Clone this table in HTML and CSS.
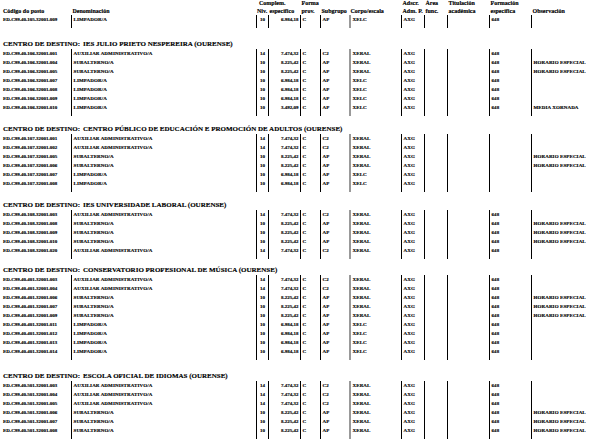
FILE: index.html
```
<!DOCTYPE html>
<html lang="gl">
<head>
<meta charset="utf-8">
<link rel="stylesheet" href="styles.css">
</head>
<body>
<div class="page">
  <div class="hdr cols">
    <div class="h code"><div class="l"></div><div class="l">Código do posto</div></div>
    <div class="h"><div class="l"></div><div class="l">Denominación</div></div>
    <div class="h niv-h"><div class="l first">Complem.</div><div class="l">Niv.</div></div>
    <div class="h"><div class="l"></div><div class="l">específico</div></div>
    <div class="h"><div class="l">Forma</div><div class="l">prov.</div></div>
    <div class="h"><div class="l"></div><div class="l">Subgrupo</div></div>
    <div class="h"><div class="l"></div><div class="l">Corpo/escala</div></div>
    <div class="h"><div class="l">Adscr.</div><div class="l">Adm. P.</div></div>
    <div class="h"><div class="l">Área</div><div class="l">func.</div></div>
    <div class="h"><div class="l">Titulación</div><div class="l">académica</div></div>
    <div class="h"><div class="l">Formación</div><div class="l">específica</div></div>
    <div class="h"><div class="l"></div><div class="l">Observación</div></div>
  </div>

  <section class="block gap-first">
    <div class="row cols"><span class="c code">ED.C99.40.105.32001.009</span><span class="c">LIMPADOR/A</span><span class="c niv">10</span><span class="c amt">6.984,18</span><span class="c">C</span><span class="c">AP</span><span class="c corpo">XELC</span><span class="c">AXG</span><span class="c"></span><span class="c"></span><span class="c">648</span><span class="c obs"></span></div>
    <div class="row stub cols"><span class="c code"></span><span class="c"></span><span class="c"></span><span class="c"></span><span class="c"></span><span class="c"></span><span class="c corpo"></span><span class="c"></span><span class="c"></span><span class="c"></span><span class="c"></span><span class="c obs"></span></div>
  </section>

  <section class="block gap-9">
    <div class="dest"><span class="lbl">CENTRO DE DESTINO:</span>IES JULIO PRIETO NESPEREIRA (OURENSE)</div>
    <div class="row cols"><span class="c code">ED.C99.40.106.32001.001</span><span class="c">AUXILIAR ADMINISTRATIVO/A</span><span class="c niv">14</span><span class="c amt">7.474,32</span><span class="c">C</span><span class="c">C2</span><span class="c corpo">XERAL</span><span class="c">AXG</span><span class="c"></span><span class="c"></span><span class="c">648</span><span class="c obs"></span></div>
    <div class="row cols"><span class="c code">ED.C99.40.106.32001.004</span><span class="c">SUBALTERNO/A</span><span class="c niv">10</span><span class="c amt">8.225,42</span><span class="c">C</span><span class="c">AP</span><span class="c corpo">XERAL</span><span class="c">AXG</span><span class="c"></span><span class="c"></span><span class="c">648</span><span class="c obs">HORARIO ESPECIAL</span></div>
    <div class="row cols"><span class="c code">ED.C99.40.106.32001.005</span><span class="c">SUBALTERNO/A</span><span class="c niv">10</span><span class="c amt">8.225,42</span><span class="c">C</span><span class="c">AP</span><span class="c corpo">XERAL</span><span class="c">AXG</span><span class="c"></span><span class="c"></span><span class="c">648</span><span class="c obs">HORARIO ESPECIAL</span></div>
    <div class="row cols"><span class="c code">ED.C99.40.106.32001.007</span><span class="c">LIMPADOR/A</span><span class="c niv">10</span><span class="c amt">6.984,18</span><span class="c">C</span><span class="c">AP</span><span class="c corpo">XELC</span><span class="c">AXG</span><span class="c"></span><span class="c"></span><span class="c">648</span><span class="c obs"></span></div>
    <div class="row cols"><span class="c code">ED.C99.40.106.32001.008</span><span class="c">LIMPADOR/A</span><span class="c niv">10</span><span class="c amt">6.984,18</span><span class="c">C</span><span class="c">AP</span><span class="c corpo">XELC</span><span class="c">AXG</span><span class="c"></span><span class="c"></span><span class="c">648</span><span class="c obs"></span></div>
    <div class="row cols"><span class="c code">ED.C99.40.106.32001.009</span><span class="c">LIMPADOR/A</span><span class="c niv">10</span><span class="c amt">6.984,18</span><span class="c">C</span><span class="c">AP</span><span class="c corpo">XELC</span><span class="c">AXG</span><span class="c"></span><span class="c"></span><span class="c">648</span><span class="c obs"></span></div>
    <div class="row cols"><span class="c code">ED.C99.40.106.32001.010</span><span class="c">LIMPADOR/A</span><span class="c niv">10</span><span class="c amt">3.492,09</span><span class="c">C</span><span class="c">AP</span><span class="c corpo">XELC</span><span class="c">AXG</span><span class="c"></span><span class="c"></span><span class="c">648</span><span class="c obs">MEDIA XORNADA</span></div>
    <div class="row stub cols"><span class="c code"></span><span class="c"></span><span class="c"></span><span class="c"></span><span class="c"></span><span class="c"></span><span class="c corpo"></span><span class="c"></span><span class="c"></span><span class="c"></span><span class="c"></span><span class="c obs"></span></div>
  </section>

  <section class="block gap-9">
    <div class="dest"><span class="lbl">CENTRO DE DESTINO:</span>CENTRO PÚBLICO DE EDUCACIÓN E PROMOCIÓN DE ADULTOS (OURENSE)</div>
    <div class="row cols"><span class="c code">ED.C99.40.107.32001.001</span><span class="c">AUXILIAR ADMINISTRATIVO/A</span><span class="c niv">14</span><span class="c amt">7.474,32</span><span class="c">C</span><span class="c">C2</span><span class="c corpo">XERAL</span><span class="c">AXG</span><span class="c"></span><span class="c"></span><span class="c"></span><span class="c obs"></span></div>
    <div class="row cols"><span class="c code">ED.C99.40.107.32001.002</span><span class="c">AUXILIAR ADMINISTRATIVO/A</span><span class="c niv">14</span><span class="c amt">7.474,32</span><span class="c">C</span><span class="c">C2</span><span class="c corpo">XERAL</span><span class="c">AXG</span><span class="c"></span><span class="c"></span><span class="c"></span><span class="c obs"></span></div>
    <div class="row cols"><span class="c code">ED.C99.40.107.32001.005</span><span class="c">SUBALTERNO/A</span><span class="c niv">10</span><span class="c amt">8.225,42</span><span class="c">C</span><span class="c">AP</span><span class="c corpo">XERAL</span><span class="c">AXG</span><span class="c"></span><span class="c"></span><span class="c"></span><span class="c obs">HORARIO ESPECIAL</span></div>
    <div class="row cols"><span class="c code">ED.C99.40.107.32001.006</span><span class="c">SUBALTERNO/A</span><span class="c niv">10</span><span class="c amt">8.225,42</span><span class="c">C</span><span class="c">AP</span><span class="c corpo">XERAL</span><span class="c">AXG</span><span class="c"></span><span class="c"></span><span class="c"></span><span class="c obs">HORARIO ESPECIAL</span></div>
    <div class="row cols"><span class="c code">ED.C99.40.107.32001.007</span><span class="c">LIMPADOR/A</span><span class="c niv">10</span><span class="c amt">6.984,18</span><span class="c">C</span><span class="c">AP</span><span class="c corpo">XELC</span><span class="c">AXG</span><span class="c"></span><span class="c"></span><span class="c"></span><span class="c obs"></span></div>
    <div class="row cols"><span class="c code">ED.C99.40.107.32001.008</span><span class="c">LIMPADOR/A</span><span class="c niv">10</span><span class="c amt">6.984,18</span><span class="c">C</span><span class="c">AP</span><span class="c corpo">XELC</span><span class="c">AXG</span><span class="c"></span><span class="c"></span><span class="c"></span><span class="c obs"></span></div>
    <div class="row stub cols"><span class="c code"></span><span class="c"></span><span class="c"></span><span class="c"></span><span class="c"></span><span class="c"></span><span class="c corpo"></span><span class="c"></span><span class="c"></span><span class="c"></span><span class="c"></span><span class="c obs"></span></div>
  </section>

  <section class="block gap-7">
    <div class="dest"><span class="lbl">CENTRO DE DESTINO:</span>IES UNIVERSIDADE LABORAL (OURENSE)</div>
    <div class="row cols"><span class="c code">ED.C99.40.108.32001.003</span><span class="c">AUXILIAR ADMINISTRATIVO/A</span><span class="c niv">14</span><span class="c amt">7.474,32</span><span class="c">C</span><span class="c">C2</span><span class="c corpo">XERAL</span><span class="c">AXG</span><span class="c"></span><span class="c"></span><span class="c">648</span><span class="c obs"></span></div>
    <div class="row cols"><span class="c code">ED.C99.40.108.32001.008</span><span class="c">SUBALTERNO/A</span><span class="c niv">10</span><span class="c amt">8.225,42</span><span class="c">C</span><span class="c">AP</span><span class="c corpo">XERAL</span><span class="c">AXG</span><span class="c"></span><span class="c"></span><span class="c">648</span><span class="c obs">HORARIO ESPECIAL</span></div>
    <div class="row cols"><span class="c code">ED.C99.40.108.32001.009</span><span class="c">SUBALTERNO/A</span><span class="c niv">10</span><span class="c amt">8.225,42</span><span class="c">C</span><span class="c">AP</span><span class="c corpo">XERAL</span><span class="c">AXG</span><span class="c"></span><span class="c"></span><span class="c">648</span><span class="c obs">HORARIO ESPECIAL</span></div>
    <div class="row cols"><span class="c code">ED.C99.40.108.32001.010</span><span class="c">SUBALTERNO/A</span><span class="c niv">10</span><span class="c amt">8.225,42</span><span class="c">C</span><span class="c">AP</span><span class="c corpo">XERAL</span><span class="c">AXG</span><span class="c"></span><span class="c"></span><span class="c">648</span><span class="c obs">HORARIO ESPECIAL</span></div>
    <div class="row cols"><span class="c code">ED.C99.40.108.32001.020</span><span class="c">AUXILIAR ADMINISTRATIVO/A</span><span class="c niv">14</span><span class="c amt">7.474,32</span><span class="c">C</span><span class="c">C2</span><span class="c corpo">XERAL</span><span class="c">AXG</span><span class="c"></span><span class="c"></span><span class="c">648</span><span class="c obs"></span></div>
    <div class="row stub cols"><span class="c code"></span><span class="c"></span><span class="c"></span><span class="c"></span><span class="c"></span><span class="c"></span><span class="c corpo"></span><span class="c"></span><span class="c"></span><span class="c"></span><span class="c"></span><span class="c obs"></span></div>
  </section>

  <section class="block gap-12">
    <div class="dest"><span class="lbl">CENTRO DE DESTINO:</span>CONSERVATORIO PROFESIONAL DE MÚSICA (OURENSE)</div>
    <div class="row cols"><span class="c code">ED.C99.40.401.32001.003</span><span class="c">AUXILIAR ADMINISTRATIVO/A</span><span class="c niv">14</span><span class="c amt">7.474,32</span><span class="c">C</span><span class="c">C2</span><span class="c corpo">XERAL</span><span class="c">AXG</span><span class="c"></span><span class="c"></span><span class="c">648</span><span class="c obs"></span></div>
    <div class="row cols"><span class="c code">ED.C99.40.401.32001.004</span><span class="c">AUXILIAR ADMINISTRATIVO/A</span><span class="c niv">14</span><span class="c amt">7.474,32</span><span class="c">C</span><span class="c">C2</span><span class="c corpo">XERAL</span><span class="c">AXG</span><span class="c"></span><span class="c"></span><span class="c">648</span><span class="c obs"></span></div>
    <div class="row cols"><span class="c code">ED.C99.40.401.32001.006</span><span class="c">SUBALTERNO/A</span><span class="c niv">10</span><span class="c amt">8.225,42</span><span class="c">C</span><span class="c">AP</span><span class="c corpo">XERAL</span><span class="c">AXG</span><span class="c"></span><span class="c"></span><span class="c">648</span><span class="c obs">HORARIO ESPECIAL</span></div>
    <div class="row cols"><span class="c code">ED.C99.40.401.32001.007</span><span class="c">SUBALTERNO/A</span><span class="c niv">10</span><span class="c amt">8.225,42</span><span class="c">C</span><span class="c">AP</span><span class="c corpo">XERAL</span><span class="c">AXG</span><span class="c"></span><span class="c"></span><span class="c">648</span><span class="c obs">HORARIO ESPECIAL</span></div>
    <div class="row cols"><span class="c code">ED.C99.40.401.32001.009</span><span class="c">SUBALTERNO/A</span><span class="c niv">10</span><span class="c amt">8.225,42</span><span class="c">C</span><span class="c">AP</span><span class="c corpo">XERAL</span><span class="c">AXG</span><span class="c"></span><span class="c"></span><span class="c">648</span><span class="c obs">HORARIO ESPECIAL</span></div>
    <div class="row cols"><span class="c code">ED.C99.40.401.32001.011</span><span class="c">LIMPADOR/A</span><span class="c niv">10</span><span class="c amt">6.984,18</span><span class="c">C</span><span class="c">AP</span><span class="c corpo">XELC</span><span class="c">AXG</span><span class="c"></span><span class="c"></span><span class="c">648</span><span class="c obs"></span></div>
    <div class="row cols"><span class="c code">ED.C99.40.401.32001.012</span><span class="c">LIMPADOR/A</span><span class="c niv">10</span><span class="c amt">6.984,18</span><span class="c">C</span><span class="c">AP</span><span class="c corpo">XELC</span><span class="c">AXG</span><span class="c"></span><span class="c"></span><span class="c">648</span><span class="c obs"></span></div>
    <div class="row cols"><span class="c code">ED.C99.40.401.32001.013</span><span class="c">LIMPADOR/A</span><span class="c niv">10</span><span class="c amt">6.984,18</span><span class="c">C</span><span class="c">AP</span><span class="c corpo">XELC</span><span class="c">AXG</span><span class="c"></span><span class="c"></span><span class="c">648</span><span class="c obs"></span></div>
    <div class="row cols"><span class="c code">ED.C99.40.401.32001.014</span><span class="c">LIMPADOR/A</span><span class="c niv">10</span><span class="c amt">6.984,18</span><span class="c">C</span><span class="c">AP</span><span class="c corpo">XELC</span><span class="c">AXG</span><span class="c"></span><span class="c"></span><span class="c">648</span><span class="c obs"></span></div>
    <div class="row stub cols"><span class="c code"></span><span class="c"></span><span class="c"></span><span class="c"></span><span class="c"></span><span class="c"></span><span class="c corpo"></span><span class="c"></span><span class="c"></span><span class="c"></span><span class="c"></span><span class="c obs"></span></div>
  </section>

  <section class="block">
    <div class="dest"><span class="lbl">CENTRO DE DESTINO:</span>ESCOLA OFICIAL DE IDIOMAS (OURENSE)</div>
    <div class="row cols"><span class="c code">ED.C99.40.501.32001.003</span><span class="c">AUXILIAR ADMINISTRATIVO/A</span><span class="c niv">14</span><span class="c amt">7.474,32</span><span class="c">C</span><span class="c">C2</span><span class="c corpo">XERAL</span><span class="c">AXG</span><span class="c"></span><span class="c"></span><span class="c">648</span><span class="c obs"></span></div>
    <div class="row cols"><span class="c code">ED.C99.40.501.32001.004</span><span class="c">AUXILIAR ADMINISTRATIVO/A</span><span class="c niv">14</span><span class="c amt">7.474,32</span><span class="c">C</span><span class="c">C2</span><span class="c corpo">XERAL</span><span class="c">AXG</span><span class="c"></span><span class="c"></span><span class="c">648</span><span class="c obs"></span></div>
    <div class="row cols"><span class="c code">ED.C99.40.501.32001.005</span><span class="c">AUXILIAR ADMINISTRATIVO/A</span><span class="c niv">14</span><span class="c amt">7.474,32</span><span class="c">C</span><span class="c">C2</span><span class="c corpo">XERAL</span><span class="c">AXG</span><span class="c"></span><span class="c"></span><span class="c">648</span><span class="c obs"></span></div>
    <div class="row cols"><span class="c code">ED.C99.40.501.32001.006</span><span class="c">SUBALTERNO/A</span><span class="c niv">10</span><span class="c amt">8.225,42</span><span class="c">C</span><span class="c">AP</span><span class="c corpo">XERAL</span><span class="c">AXG</span><span class="c"></span><span class="c"></span><span class="c">648</span><span class="c obs">HORARIO ESPECIAL</span></div>
    <div class="row cols"><span class="c code">ED.C99.40.501.32001.007</span><span class="c">SUBALTERNO/A</span><span class="c niv">10</span><span class="c amt">8.225,42</span><span class="c">C</span><span class="c">AP</span><span class="c corpo">XERAL</span><span class="c">AXG</span><span class="c"></span><span class="c"></span><span class="c">648</span><span class="c obs">HORARIO ESPECIAL</span></div>
    <div class="row cols"><span class="c code">ED.C99.40.501.32001.008</span><span class="c">SUBALTERNO/A</span><span class="c niv">10</span><span class="c amt">8.225,42</span><span class="c">C</span><span class="c">AP</span><span class="c corpo">XERAL</span><span class="c">AXG</span><span class="c"></span><span class="c"></span><span class="c">648</span><span class="c obs">HORARIO ESPECIAL</span></div>
    <div class="row stub cols"><span class="c code"></span><span class="c"></span><span class="c"></span><span class="c"></span><span class="c"></span><span class="c"></span><span class="c corpo"></span><span class="c"></span><span class="c"></span><span class="c"></span><span class="c"></span><span class="c obs"></span></div>
  </section>
</div>
</body>
</html>
```

FILE: styles.css
```
html, body {
  margin: 0;
  padding: 0;
  background: #fff;
}

body {
  color: #000;
  font-family: "Liberation Serif", "Times New Roman", serif;
  font-weight: bold;
  -webkit-font-smoothing: antialiased;
  -webkit-text-stroke: 0.15px #000;
}

.page {
  width: 616px;
  height: 439px;
  overflow: hidden;
}

.cols {
  display: grid;
  grid-template-columns: 71px 185px 12px 32px 20px 29px 52px 23px 23px 42px 42px 85px;
}

/* header */
.hdr {
  height: 15px;
  font-size: 6px;
  line-height: 7.5px;
}

.h {
  padding-left: 1.5px;
  white-space: nowrap;
}

.l {
  height: 7.5px;
}

.h.code {
  padding-left: 3px;
}

.h.niv-h {
  padding-left: 1px;
}

.l.first {
  padding-left: 2px;
}

/* blocks */
.gap-first { margin-bottom: 11.5px; }
.gap-9 { margin-bottom: 9px; }
.gap-7 { margin-bottom: 7px; }
.gap-12 { margin-bottom: 12px; }

.dest {
  height: 9px;
  line-height: 9px;
  font-size: 7px;
  padding-left: 3px;
  white-space: nowrap;
}

.lbl {
  display: inline-block;
  width: 80px;
}

/* data rows */
.row {
  height: 9px;
  font-size: 5px;
  line-height: 9px;
  letter-spacing: 0.1px;
}

.c {
  display: block;
  box-sizing: border-box;
  border-left: 1px solid #000;
  padding-left: 1.5px;
  white-space: nowrap;
  overflow: hidden;
}

.c.code {
  border-left: 0 none;
  padding-left: 3px;
  letter-spacing: 0;
}

.c.niv {
  text-align: center;
  padding-left: 0;
}

.c.amt {
  text-align: right;
  padding-right: 1.5px;
  letter-spacing: 0;
}

.c.corpo {
  border-left: 2px solid #999;
}

.c.obs {
  border-left: 1.5px solid #000;
}

.stub {
  height: 4px;
}
```
